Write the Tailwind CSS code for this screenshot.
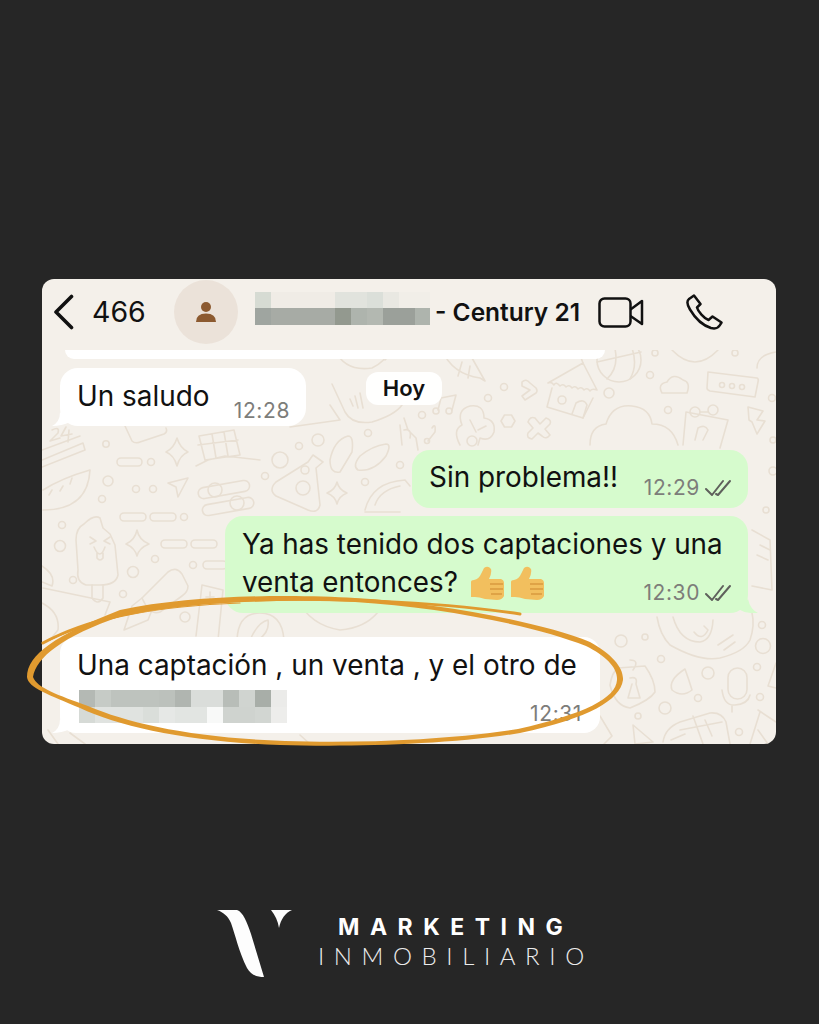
<!doctype html>
<html lang="es">
<head>
<meta charset="utf-8">
<script src="https://cdn.jsdelivr.net/npm/@tailwindcss/browser@4"></script>
</head>
<body class="m-0 bg-[#262626]">
<main class="relative w-[819px] h-[1024px] bg-[#262626] overflow-hidden flex flex-col items-center font-['Inter',sans-serif] text-[#111111]">
  <section class="relative mt-[279px] ml-[-1px] w-[734px] h-[465px] rounded-[12px] overflow-hidden bg-[#f4f0ea] flex flex-col">
    <header class="h-[71px] pb-[5px] flex items-center shrink-0">
      <svg class="ml-[11px] w-[22px] h-[36px]" viewBox="0 0 22 36" fill="none" stroke="#111" stroke-width="3.6" stroke-linecap="round" stroke-linejoin="round"><path d="M18.500 2.500 L3 18 L18.500 33.500"/></svg>
      <span class="ml-[17px] w-[82px] text-[28.500px]">466</span>
      <div class="w-[64px] h-[64px] rounded-full bg-[#ebe2d9] flex items-center justify-center shrink-0">
        <svg class="w-[22px] h-[22px]" viewBox="0 0 22 22" fill="#8c5a30"><circle cx="11" cy="6" r="5"/><path d="M1 21 Q1 12.500 11 12.500 Q21 12.500 21 21 Z"/></svg>
      </div>
      <div class="ml-[17px] mb-[8px] w-[175px] h-[33px] flex flex-col shrink-0">
        <div class="flex h-[16px]">
          <i class="w-[16px] bg-[#d6dbd3]"></i><i class="w-[64px] bg-[#f0ece6]"></i><i class="w-[32px] bg-[#e1e3dd]"></i><i class="w-[16px] bg-[#dbdfd9]"></i><i class="w-[16px] bg-[#e9e8e2]"></i><i class="w-[31px] bg-[#f1eee8]"></i>
        </div>
        <div class="flex h-[17px]">
          <i class="w-[16px] bg-[#9fa5a0]"></i><i class="w-[64px] bg-[#a7aba5]"></i><i class="w-[16px] bg-[#93998f]"></i><i class="w-[16px] bg-[#aeb4ad]"></i><i class="w-[16px] bg-[#b3b8b1]"></i><i class="w-[32px] bg-[#9ba09a]"></i><i class="w-[15px] bg-[#aeb4ad]"></i>
        </div>
      </div>
      <span class="ml-[5px] w-[163px] text-[24.500px] font-semibold whitespace-nowrap">- Century 21</span>
      <svg class="w-[46px] h-[31px] shrink-0" viewBox="0 0 46 31" fill="none" stroke="#111" stroke-width="2.500" stroke-linejoin="round"><rect x="1.500" y="1.500" width="31" height="28" rx="5"/><path d="M32.500 12.500 L44 4 V27 L32.500 19"/></svg>
      <svg class="ml-[41px] w-[38px] h-[38px] shrink-0" viewBox="0 0 38 38" fill="none" stroke="#111" stroke-width="2.500" stroke-linejoin="round"><path d="M9 2.500 L4 6 C1.500 8 2 11.500 5 16.500 C10 25 18 32.500 26 35 C30 36 33 35.500 35 32 L36.500 29.500 L27.500 23.500 L23.500 27 C19 25.500 13 18.500 12 14.500 L15.500 11 Z"/></svg>
    </header>

    <div class="relative flex-1 flex flex-col">
      <svg class="absolute inset-0 w-[734px] h-[394px]" viewBox="42 350 734 394" fill="none" stroke="#e8dfd3" stroke-width="1.600" stroke-linecap="round" stroke-linejoin="round">
        <!-- upper left -->
        <path d="M42 460 L83 443 L85 450 L42 467"/><path d="M42 450 L80 436"/><path d="M52 430 Q60 426 58 433 L50 441 L60 438 M66 427 L61 436 L72 434 M69 430 L68 442"/>
        <path d="M125 426 L132 441 Q135 444 140 442 L164 434 Q168 432 166 428"/><circle cx="106" cy="444" r="3.200"/>
        <path d="M177 438 Q180 448 188 452 Q180 455 177 466 Q174 455 166 452 Q174 448 177 438Z"/>
        <rect x="117" y="458" width="25" height="8" rx="4"/><circle cx="151" cy="462" r="3.500"/>
        <path d="M199 436 L234 430 L240 455 L205 460Z M198 445 L238 440 M212 434 L216 458 M224 432 L228 456 M196 466 L208 460 L225 456 L260 460"/>
        <path d="M43 510 Q88 510 90 470 Q62 478 43 490"/><path d="M49 495 L52 490 M60 491 L63 486 M70 484 L72 478"/>
        <circle cx="108" cy="481" r="5"/><circle cx="136" cy="489" r="3.500"/><circle cx="153" cy="489" r="3.500"/><circle cx="102" cy="499" r="3.500"/>
        <path d="M168 483 L188 478 L178 497 L176 487Z"/>
        <rect x="198" y="484" width="52" height="11" rx="5.500" transform="rotate(-10 224 490)"/><circle cx="215" cy="490" r="7"/>
        <rect x="202" y="501" width="52" height="11" rx="5.500" transform="rotate(-10 228 506)"/><circle cx="237" cy="503" r="7"/>
        <circle cx="280" cy="460" r="8"/><circle cx="318" cy="440" r="6"/><circle cx="265" cy="476" r="3.500"/>
        <path d="M313 455 L323 462 L316 468 L320 505 Q318 514 308 510 L276 496 Q268 490 276 482 L308 462Z"/><circle cx="305" cy="470" r="4"/><circle cx="303" cy="488" r="7"/>
        <path d="M348 436 Q354 436 352 452 L340 472 Q330 474 330 460Q334 440 348 436Z"/><path d="M386 444 Q392 444 386 456 Q374 472 358 470 Q352 466 360 456 Q372 446 386 444Z"/>
        <path d="M337 482 Q339 490 347 493 Q339 496 337 504 Q335 496 327 493 Q335 490 337 482Z"/><circle cx="365" cy="482" r="3.500"/><circle cx="400" cy="465" r="3.500"/>
        <path d="M365 510 Q372 482 405 480 L410 486 M375 505 Q380 490 400 486 M365 512 L400 512"/><path d="M290 427 L340 420 L330 405"/>

        <!-- popsicle etc -->
        <path d="M84 524 Q94 514 100 518 L103 528 L110 534 L115 545 L118 575 Q116 585 100 585 L86 585 Q76 582 78 570 L76 540 Q76 528 84 524Z"/><path d="M92 585 V598 Q98 606 103 598 V585"/><path d="M90 537 L96 541 L90 544 M110 537 L104 541 L110 544"/><path d="M94 547 Q100 561 105 547 M97 553 V558 Q100 562 103 558 V553"/>
        <rect x="120" y="513" width="26" height="8" rx="4"/><rect x="150" y="513" width="26" height="8" rx="4"/><circle cx="184" cy="517" r="3.500"/><circle cx="62" cy="525" r="3.500"/><circle cx="60" cy="546" r="5.500"/>
        <path d="M137 530 Q139 540 149 544 Q139 548 137 556 Q135 548 126 544 Q135 540 137 530Z"/>
        <rect x="161" y="540" width="26" height="8" rx="4"/><rect x="191" y="540" width="26" height="8" rx="4"/><circle cx="155" cy="559" r="3.500"/><rect x="203" y="561" width="24" height="8" rx="4"/><circle cx="193" cy="565" r="3.500"/>
        <circle cx="133" cy="572" r="5.500"/><circle cx="73" cy="580" r="3.500"/><circle cx="123" cy="594" r="3.500"/>
        <path d="M42 566 Q56 575 52 586 L42 582"/>
        <path d="M43 588 L110 602 L105 615"/><path d="M42 603 Q60 612 58 630 L50 640"/>
        <path d="M142 598 L168 572 Q176 566 182 574 L188 586 Q188 592 182 596 L160 612 Q150 616 142 598Z"/><path d="M142 598 L132 606 L124 630 L148 620 L152 610"/><circle cx="185" cy="617" r="5"/>
        <path d="M202 585 L223 590 L218 640 M202 585 L196 636"/><path d="M210 592 V602 M206 597 H214"/>
        <path d="M237 640 Q238 613 260 613 Q282 613 284 640"/><path d="M250 640 Q258 622 268 620 Q270 632 258 640"/>
        <path d="M298 600 Q310 625 340 630 Q365 628 378 612"/>

        <!-- middle top -->
        <path d="M332 384 L345 412 Q352 425 372 422 Q395 415 402 405"/><path d="M350 399 L353 406 M355 396 L358 408 M360 393 L363 408"/>
        <path d="M335 350 Q345 372 372 368 Q385 362 390 350"/><path d="M385 360 L395 350"/>
        <path d="M442 350 Q452 374 480 378 L485 381 L472 358 L460 350 M462 362 L458 376 M470 366 L468 378"/>
        <path d="M438 410 L441 398 L456 395 L452 410"/><circle cx="436" cy="411" r="3"/><circle cx="449" cy="411" r="3"/>
        <path d="M432 428 Q436 422 435 432 L428 441"/><circle cx="427" cy="441" r="2.500"/>
        <circle cx="488" cy="398" r="3.500"/><circle cx="504" cy="387" r="3.500"/><circle cx="422" cy="415" r="3.500"/><circle cx="368" cy="433" r="3.500"/><circle cx="299" cy="446" r="3.500"/>
        <path d="M522 382 Q526 378 530 383 L536 388 Q538 391 536 393 L525 400 L522 396 L530 390 L522 386Z"/>
        <path d="M501 421 L504.500 415 L511.500 415 L515 421 L511.500 427 L504.500 427Z"/>
        <path d="M535 418 L540 424 L546 418 Q552 420 550 424 L545 429 L550 435 Q546 440 542 436 L538 433 L532 439 Q526 438 528 433 L533 428 L528 422 Q530 416 535 418Z"/>
        <path d="M460 445 Q452 430 462 425 Q456 410 470 406 Q484 404 484 418 Q496 420 494 432 Q490 442 480 438 L478 445 M470 420 L476 432 M478 430 L486 426"/><circle cx="472" cy="441" r="5"/>
        <path d="M404 418 L408 430 L416 438 L418 450 M400 425 L402 445 M404 430 Q412 428 410 438"/>

        <!-- house etc -->
        <path d="M548 383 L583 363 L597 390 Q592 388 590 391 Q587 387 584 390 Q581 386 578 389 Q575 385 572 388 Q569 384 566 387 Q563 383 560 386 Q556 381 554 385 Q551 381 548 383Z"/><path d="M552 388 L547 407 L583 418 L593 398"/><circle cx="562" cy="400" r="4"/><path d="M572 414 L576 403 Q584 398 587 405 L583 418"/>
        <path d="M583 363 L578 350"/>
        <circle cx="619" cy="360" r="22"/><path d="M597 362 L641 352 M607 379 Q622 365 612 339 M630 379 Q640 362 628 339"/>
        <circle cx="650" cy="375" r="3.500"/><path d="M662 393 Q657 384 667 382 Q673 372 683 380 Q691 382 687 393Z"/>
        <path d="M708 372 L757 378 Q759 379 758 382 L755 397 L710 391 Q707 390 707 388Z"/><circle cx="722" cy="385" r="2.500"/><circle cx="732" cy="386" r="2.500"/><circle cx="742" cy="387" r="2.500"/><circle cx="772" cy="398" r="3.500"/><path d="M776 352 Q757 355 757 368"/><path d="M672 350 Q695 374 718 350"/><circle cx="655" cy="353" r="3"/><circle cx="735" cy="353" r="3"/>
        <path d="M590 445 Q590 426 606 424 Q612 404 632 406 Q650 408 652 424 Q672 424 678 445"/><circle cx="668" cy="410" r="3.500"/><circle cx="609" cy="393" r="5"/>
        <path d="M686 412 L728 420 L720 448 M686 412 L683 445"/><circle cx="695" cy="412" r="5"/><circle cx="713" cy="410" r="5"/><path d="M700 412 H708"/><path d="M695 440 L698 428 Q705 424 708 430 L703 440"/>
        <path d="M748 407 L763 411 L757 420 L765 421 L757 434 L752 422 L749 420Z"/><circle cx="773" cy="471" r="4"/><circle cx="766" cy="510" r="3"/>
        <path d="M752 530 L770 540 L772 590 L752 586"/><path d="M760 545 L770 550 M757 555 L768 560"/><circle cx="773" cy="440" r="3"/>

        <!-- lower right -->
        <path d="M657 617 Q660 635 670 645 Q700 662 720 658 Q744 652 750 640 Q755 625 752 613"/><path d="M673 617 Q680 642 700 642 Q712 640 713 620"/><path d="M694 632 Q702 642 708 630 L704 626"/><path d="M718 645 L733 635 M724 650 L735 642"/>
        <circle cx="621" cy="641" r="6"/><circle cx="645" cy="637" r="3"/><circle cx="661" cy="659" r="3.500"/><circle cx="708" cy="673" r="6"/><circle cx="698" cy="698" r="3.500"/><circle cx="757" cy="667" r="3.500"/><circle cx="760" cy="697" r="3.500"/><circle cx="763" cy="646" r="7.500"/><circle cx="762" cy="625" r="3.500"/><circle cx="665" cy="708" r="6"/><circle cx="638" cy="716" r="3"/><circle cx="739" cy="732" r="3.500"/>
        <path d="M685 669 Q668 680 672 690 Q682 698 692 690 Q689 680 685 669Z M671 680"/><path d="M630 660 Q640 660 633 670 M618 668 L645 666 Q655 680 655 692 Q650 700 630 708 Q615 706 610 685 Q612 672 618 668Z"/><path d="M630 678 Q638 676 636 684 L640 698 L628 698 L632 684"/>
        <rect x="728" y="668" width="19" height="31" rx="9.500"/><path d="M722 690 Q724 706 735 705 Q748 704 750 695 M732 705 V712"/>
        <path d="M663 742 Q665 728 680 722 L710 713 Q722 712 726 722 L730 744"/><path d="M693 716 L703 744 M680 730 L722 722 M705 720 L712 736"/><path d="M671 740 L685 734"/>
        <path d="M633 725 L653 742 L635 744Z"/><path d="M600 716 L612 736 L604 744"/><path d="M758 710 L776 722 M750 744 L760 712 M758 730 L768 744"/><path d="M776 663 L768 686 L776 688"/>
        <path d="M48 730 L58 744 M70 733 L85 744"/><path d="M300 735 L310 744"/>
      </svg>

      <div class="relative z-10 ml-[23px] w-[540px] h-[9px] rounded-b-[12px] bg-white"></div>

      <div class="relative z-10 mt-[9px] ml-[18px] flex items-start">
        <div class="relative w-[246px] h-[58px] rounded-[18px] bg-white flex justify-between items-end pl-[17px] pr-[16px] pb-[4px]">
          <svg class="absolute left-[-8px] bottom-0 w-[18px] h-[14px]" viewBox="0 0 18 14" fill="#fff"><path d="M8 0 Q8 10 0 14 Q10 14 18 10Z"/></svg>
          <span class="relative text-[27.900px] leading-[38px] mb-[7px]">Un saludo</span>
          <span class="relative text-[21px] leading-[22px] tracking-[0.6px] text-[#7d7d7a]">12:28</span>
        </div>
        <div class="ml-[60px] mt-[4px] w-[76px] h-[33px] rounded-[12px] bg-white/95 flex items-center justify-center text-[22px] font-semibold">Hoy</div>
      </div>

      <div class="relative z-10 mt-[24px] mr-[28px] self-end w-[336px] h-[58px] rounded-[18px] bg-[#d6fbcd] flex justify-between items-end pl-[17px] pr-[16px] pb-[9px]">
        <span class="text-[27.900px] leading-[38px] mb-[3px]">Sin problema!!</span>
        <span class="flex items-center gap-[5px] text-[21px] leading-[22px] tracking-[0.6px] text-[#7d7d7a]">12:29
          <svg class="w-[27px] h-[18px]" viewBox="0 0 27 18" fill="none" stroke="#5f605c" stroke-width="2" stroke-linecap="round" stroke-linejoin="round"><path d="M1 10 L7 16 L18 2"/><path d="M11 15 L13 16 L25 2"/></svg>
        </span>
      </div>

      <div class="relative z-10 mt-[8px] mr-[28px] self-end w-[523px] h-[97px] rounded-[18px] bg-[#d6fbcd] pl-[17px] pt-[9px]">
        <svg class="absolute right-[-10px] bottom-0 w-[20px] h-[14px]" viewBox="0 0 20 14" fill="#d6fbcd"><path d="M10 0 Q12 10 20 14 Q8 15 0 10Z"/></svg>
        <p class="text-[27.800px] leading-[38px] whitespace-nowrap">Ya has tenido dos captaciones y una</p>
        <p class="flex items-center text-[27.800px] leading-[38px] whitespace-nowrap">venta entonces?
          <svg class="ml-[13px] mt-[2px] w-[34px] h-[35px]" viewBox="0 0 34 35"><path fill="#f2bf5e" d="M0 16 Q0 14 3 14 Q8 13 10 8 L13 2 Q17 -1 20 3 Q21 7 18 13 L30 13 Q33 14 33 17 L33 30 Q31 34 26 34 L14 33 Q8 31 4 31 L0 31Z"/><path fill="none" stroke="#d99b3f" stroke-width="1.300" d="M19 18 H32 M19 23 H32 M20 28 H31"/></svg>
          <svg class="ml-[6px] mt-[2px] w-[34px] h-[35px]" viewBox="0 0 34 35"><path fill="#f2bf5e" d="M0 16 Q0 14 3 14 Q8 13 10 8 L13 2 Q17 -1 20 3 Q21 7 18 13 L30 13 Q33 14 33 17 L33 30 Q31 34 26 34 L14 33 Q8 31 4 31 L0 31Z"/><path fill="none" stroke="#d99b3f" stroke-width="1.300" d="M19 18 H32 M19 23 H32 M20 28 H31"/></svg>
        </p>
        <span class="absolute right-[16px] bottom-[9px] flex items-center gap-[5px] text-[21px] leading-[22px] tracking-[0.6px] text-[#7d7d7a]">12:30
          <svg class="w-[27px] h-[18px]" viewBox="0 0 27 18" fill="none" stroke="#5f605c" stroke-width="2" stroke-linecap="round" stroke-linejoin="round"><path d="M1 10 L7 16 L18 2"/><path d="M11 15 L13 16 L25 2"/></svg>
        </span>
      </div>

      <div class="relative z-10 mt-[24px] ml-[18px] w-[540px] h-[96px] rounded-[16px] bg-white pl-[17px] pt-[9px]">
        <svg class="absolute left-[-8px] bottom-0 w-[18px] h-[14px]" viewBox="0 0 18 14" fill="#fff"><path d="M8 0 Q8 10 0 14 Q10 14 18 10Z"/></svg>
        <p class="text-[27.900px] leading-[38px] whitespace-nowrap">Una captación , un venta , y el otro de</p>
        <div class="mt-[6px] ml-[2px] w-[208px] flex flex-col">
          <div class="flex h-[17px]">
            <i class="w-[16px] bg-[#b4b9b4]"></i><i class="w-[16px] bg-[#c6cbc6]"></i><i class="w-[48px] bg-[#bec3be]"></i><i class="w-[16px] bg-[#bcc1bc]"></i><i class="w-[16px] bg-[#b0b5b0]"></i><i class="w-[32px] bg-[#dadddA]"></i><i class="w-[16px] bg-[#b8bdb8]"></i><i class="w-[16px] bg-[#d0d4d0]"></i><i class="w-[16px] bg-[#a8aea8]"></i><i class="w-[16px] bg-[#ebebe9]"></i>
          </div>
          <div class="flex h-[16px]">
            <i class="w-[16px] bg-[#d6dad6]"></i><i class="w-[48px] bg-[#e0e3e0]"></i><i class="w-[16px] bg-[#dadeda]"></i><i class="w-[16px] bg-[#e6e8e6]"></i><i class="w-[32px] bg-[#e2e5e2]"></i><i class="w-[16px] bg-[#f8f9f8]"></i><i class="w-[32px] bg-[#cfd3cf]"></i><i class="w-[16px] bg-[#d2d6d2]"></i><i class="w-[16px] bg-[#ededeb]"></i>
          </div>
        </div>
        <span class="absolute right-[18px] bottom-[8px] text-[21px] leading-[22px] tracking-[0.6px] text-[#7d7d7a]">12:31</span>
      </div>
    </div>
  </section>

  <svg class="absolute z-20 left-0 top-0 w-[819px] h-[1024px] pointer-events-none" viewBox="0 0 819 1024" fill="none" stroke-linecap="round">
    <path fill="#e09a2f" fill-rule="evenodd" d="M27 677 C27 655 55 635 120 610 C190 595 290 594 355 598 C440 603 540 622 590 642 C612 654 624 668 623 680 C620 700 590 718 520 733 C450 745 350 747 280 745 C190 742 120 727 80 708 C50 695 28 688 27 677Z M33 677 C37 688 58 695 88 706 C130 724 195 738 285 741 C355 743 440 741 518 729 C585 714 616 698 617 680 C618 668 606 656 586 646 C536 626 440 607 355 602 C290 599 190 601 122 616 C62 636 36 658 33 677Z"/>
    <path stroke="#e09a2f" stroke-width="3" d="M43 643 C85 620 150 605 230 601 C320 596 440 602 520 614"/>
    <path stroke="#e09a2f" stroke-width="1.200" d="M50 640 C95 618 160 606 240 603"/>
  </svg>

  <footer class="absolute left-0 right-0 top-[908px] pl-[217px] flex justify-start">
    <div class="flex items-start">
      <svg class="w-[76px] h-[71px] shrink-0" viewBox="0 0 76 71" fill="#fdfdfd"><path d="M0 2 H20 C26 4 30 14 34 26 L47 69 C40 69 34 67 30 60 C22 44 18 26 14 15 C11 8 6 4 0 2Z"/><path d="M54 2 H75 C68 5 64 11 62 20 C61 13 58 7 54 2Z"/></svg>
      <div class="ml-[25px] mt-[5px] flex flex-col text-white">
        <span class="ml-[20px] text-[23px] leading-[29px] font-bold tracking-[10.500px] whitespace-nowrap font-['Inter',sans-serif]">MARKETING</span>
        <span class="text-[24px] leading-[28px] font-light tracking-[9.600px] whitespace-nowrap text-[#ececec] font-['Lato',sans-serif]">INMOBILIARIO</span>
      </div>
    </div>
  </footer>
</main>
</body>
</html>
